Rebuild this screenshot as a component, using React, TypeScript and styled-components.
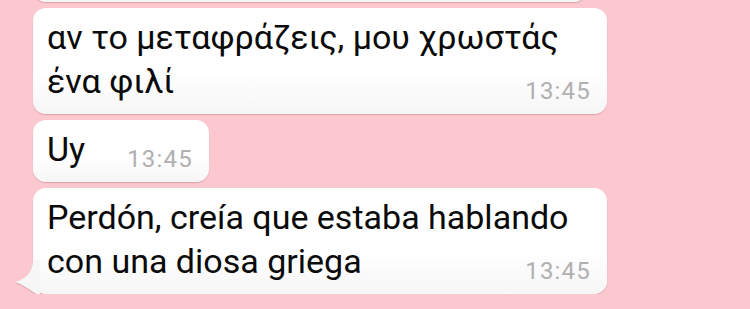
import styled, { createGlobalStyle } from 'styled-components';

const GlobalStyle = createGlobalStyle`
  html, body {
    margin: 0;
    background: #fbc8d0;
    overflow: hidden;
  }
  body {
    font-family: Roboto, "Noto Sans", "DejaVu Sans", sans-serif;
    -webkit-font-smoothing: antialiased;
  }
`;

const StyledChat = styled.ol`
  display: flex;
  flex-direction: column;
  align-items: flex-start;
  gap: 6px;
  list-style: none;
  margin: -37px 0 0;
  padding: 0 0 0 33px;
  width: 750px;
  box-sizing: border-box;
`;

const StyledBubble = styled.li<{ $wide?: boolean }>`
  position: relative;
  flex-shrink: 0;
  max-width: 574px;
  width: ${({ $wide }) => ($wide ? '574px' : 'auto')};
  box-sizing: border-box;
  padding: 7px 16px 9px 14px;
  background: linear-gradient(#ffffff 60%, #f6f6f6);
  border-radius: 13px;
  box-shadow: 0 1px 1px rgba(160, 90, 100, 0.35);
  color: #0a0a0a;
  font-size: 34px;
  line-height: 44px;

  &::after {
    content: '';
    display: table;
    clear: both;
  }
`;

const StyledPrevBubble = styled.li`
  flex-shrink: 0;
  width: 554px;
  height: 39px;
  background: linear-gradient(#ffffff 60%, #f6f6f6);
  border-radius: 13px;
  box-shadow: 0 1px 1px rgba(160, 90, 100, 0.35);
`;

const StyledTail = styled.svg`
  position: absolute;
  left: -19px;
  bottom: -1px;
  width: 26px;
  height: 35px;
  filter: drop-shadow(0 1px 0.5px rgba(160, 90, 100, 0.35));
`;

const StyledTime = styled.time`
  float: right;
  margin: 18px 0 0 42px;
  color: #b0b0b0;
  font-size: 24px;
  line-height: 28px;
  letter-spacing: 1.2px;
`;

type MessageProps = {
  lines: string[];
  time: string;
  wide?: boolean;
  tail?: boolean;
};

const Message = ({ lines, time, wide, tail }: MessageProps): JSX.Element => (
  <StyledBubble $wide={wide}>
    {tail && (
      <StyledTail viewBox="0 0 26 35">
        <path
          d="M19 0 C19 12 12 19 1 22 C8 24 15 29 22 34 L26 34 L26 0 Z"
          fill="#f7f7f7"
        />
      </StyledTail>
    )}
    {lines.map((line, i) => (
      <span key={line}>
        {i > 0 && <br />}
        {line}
      </span>
    ))}
    <StyledTime>{time}</StyledTime>
  </StyledBubble>
);

const App = (): JSX.Element => (
  <>
    <GlobalStyle />
    <StyledChat>
      <StyledPrevBubble />
      <Message
        lines={['αν το μεταφράζεις, μου χρωστάς', 'ένα φιλί']}
        time="13:45"
        wide
      />
      <Message lines={['Uy']} time="13:45" />
      <Message
        lines={['Perdón, creía que estaba hablando', 'con una diosa griega']}
        time="13:45"
        wide
        tail
      />
    </StyledChat>
  </>
);

export default App;
